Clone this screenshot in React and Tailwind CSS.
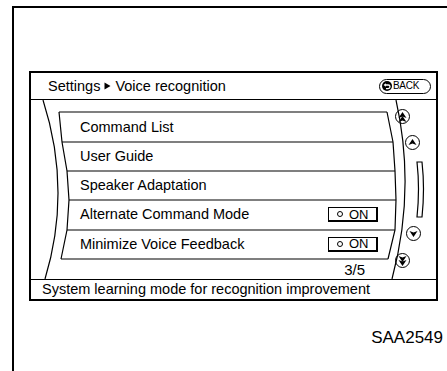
import React from "react";

function Circ({ children, className = "" }) {
  return (
    <div className={"w-[15px] h-[15px] rounded-full border-[1.5px] border-black flex items-center justify-center " + className}>
      {children}
    </div>
  );
}

function Dart({ up = true, double = false }) {
  const single = "M4 0 L8 6 L4 4.5 L0 6 Z";
  return (
    <svg width="9" height={double ? 10 : 7} viewBox={double ? "0 0 8 10" : "0 0 8 7"} style={{ transform: up ? "none" : "rotate(180deg)" }}>
      <path d={single} fill="black" />
      {double && <path d={single} fill="black" transform="translate(0 4)" />}
    </svg>
  );
}

function OnBox() {
  return (
    <div className="w-[50px] h-[15px] border border-black border-r-2 border-b-2 flex items-center pl-[8px] gap-[6px]">
      <div className="w-[6px] h-[6px] rounded-full border border-black" />
      <span className="text-[13px] leading-none">ON</span>
    </div>
  );
}

const rows = [
  { label: "Command List", h: "h-[30px]" },
  { label: "User Guide", h: "h-[29px]" },
  { label: "Speaker Adaptation", h: "h-[29px]" },
  { label: "Alternate Command Mode", h: "h-[29px]", on: true },
  { label: "Minimize Voice Feedback", h: "h-[30px]", on: true },
];

export default function App() {
  const L = [[28, 12], [31, 42], [36, 71], [38, 100], [36, 130], [30, 159]];
  const R = [[356, 12], [362, 42], [364, 71], [365, 100], [364, 130], [357, 159]];
  return (
    <div className="w-[447px] h-[371px] bg-white overflow-hidden font-['Liberation_Sans',Arial,sans-serif] text-black pt-[6px] pl-[12px]">
      <div className="w-[435px] h-[365px] border-t-2 border-l-2 border-black flex flex-col pl-[15px] pt-[63px]">
        <div className="w-[409px] h-[230px] border-2 border-black flex flex-col">
          <div className="h-[27px] border-b border-black flex items-center justify-between pl-[17px] pr-[5px]">
            <div className="flex items-center text-[14.5px] leading-none">
              <span>Settings</span>
              <svg width="13" height="8" viewBox="0 0 13 8" className="mx-[1px]">
                <path d="M3.5 0.5 L9.5 4 L3.5 7.5 Z" fill="black" />
              </svg>
              <span>Voice recognition</span>
            </div>
            <div className="w-[52px] h-[15px] rounded-full border-[1.5px] border-black flex items-center pl-[2px] gap-[1px]">
              <svg width="10" height="10" viewBox="0 0 10 10">
                <circle cx="5" cy="5" r="5" fill="black" />
                <path d="M3 4 H6.2 A1.8 1.8 0 0 1 6.2 7.6 H4" stroke="white" strokeWidth="1.3" fill="none" />
                <path d="M1.6 4 L3.8 2.2 L3.8 5.8 Z" fill="white" />
              </svg>
              <span className="text-[10px] leading-none tracking-[-0.3px]">BACK</span>
            </div>
          </div>

          <div className="relative h-[179px] flex">
            <svg className="absolute inset-0 pointer-events-none" width="405" height="179" viewBox="0 0 405 179">
              <path d="M12 0 Q41 90 14 179" stroke="black" strokeWidth="1.2" fill="none" />
              <path d="M365 0 Q385 90 361 179" stroke="black" strokeWidth="1.2" fill="none" />
              <polyline points={L.map((p) => p.join(",")).join(" ")} stroke="black" strokeWidth="1.2" fill="none" />
              <polyline points={R.map((p) => p.join(",")).join(" ")} stroke="black" strokeWidth="1.2" fill="none" />
              {L.map((p, i) => (
                <line key={i} x1={p[0]} y1={p[1]} x2={R[i][0]} y2={R[i][1]} stroke="black" strokeWidth="1.2" />
              ))}
            </svg>

            <div className="relative w-[347px] flex flex-col pt-[12px] pl-[49px]">
              {rows.map((r) => (
                <div key={r.label} className={r.h + " flex items-center justify-between text-[14.5px] leading-none"}>
                  <span>{r.label}</span>
                  {r.on && <OnBox />}
                </div>
              ))}
              <div className="text-[15px] leading-none text-right pr-[13px] mt-[3px]">3/5</div>
            </div>

            <div className="relative flex flex-col pt-[9px]">
              <Circ className="ml-[17px]"><Dart double /></Circ>
              <Circ className="ml-[27px] mt-[11px]"><Dart /></Circ>
              <svg width="10" height="57" viewBox="0 0 10 57" className="ml-[38px] mt-[11px]">
                <path d="M1 1 L6 1 Q9 28 6 56 L1 56 Q4 28 1 1 Z" stroke="black" strokeWidth="1.2" fill="white" />
              </svg>
              <Circ className="ml-[28px] mt-[8px]"><Dart up={false} /></Circ>
              <Circ className="ml-[17px] mt-[12px]"><Dart up={false} double /></Circ>
            </div>
          </div>

          <div className="h-[20px] border-t border-black flex items-center pl-[11px] text-[14.5px] leading-none">
            System learning mode for recognition improvement
          </div>
        </div>
        <div className="self-end pr-[4px] mt-[28px] text-[17px] leading-none">SAA2549</div>
      </div>
    </div>
  );
}
